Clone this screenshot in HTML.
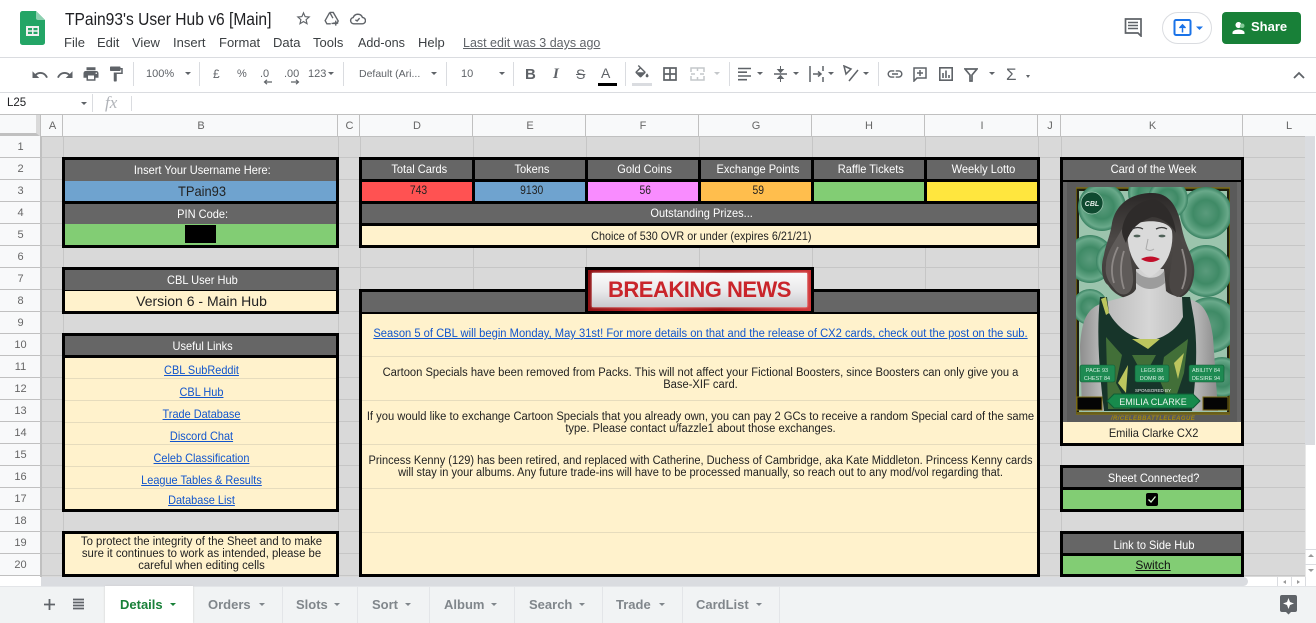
<!DOCTYPE html>
<html><head><meta charset="utf-8"><style>
html,body{margin:0;padding:0;background:#fff}
#p{position:relative;width:1316px;height:623px;overflow:hidden;font-family:"Liberation Sans",sans-serif;color:#202124;background:#fff}
#p div,#p svg.a{position:absolute}
.s{display:inline-block;transform:scaleX(.92)}
.s9{display:inline-block;transform:scaleX(.9)}
.t{white-space:nowrap;text-align:center}
.m{font-size:13px;top:35px;color:#3c4043;white-space:nowrap;line-height:16px}
.tb{font-size:11px;color:#5f6368;top:67px;line-height:14px;white-space:nowrap}
.ar{width:0;height:0;border-left:3.5px solid transparent;border-right:3.5px solid transparent;border-top:3.5px solid #5f6368}
.sep{width:1px;height:24px;top:62px;background:#dadce0}
.rh{left:0;width:41px;height:21px;background:#f8f9fa;border-bottom:1px solid #c0c0c0;text-align:center;font-size:11px;line-height:23px;color:#666}
.ch{top:115px;height:21px;background:#f8f9fa;border-right:1px solid #c0c0c0;border-bottom:1px solid #c0c0c0;text-align:center;font-size:11px;line-height:22px;color:#666;text-indent:2px}
.vl{width:1px;background:#c6c6c6;top:136px;height:441px}
.g{background:#666;color:#fff;font-size:12px;text-align:center;line-height:22px;white-space:nowrap}
.c{background:#fff2cc;color:#222;font-size:12px;text-align:center;white-space:nowrap}
.k{background:#000}
.lk{color:#1155cc;text-decoration:underline;font-size:12px;left:66px;width:271px;text-align:center;height:22px;line-height:24px;white-space:nowrap;transform:scaleX(.91)}
.fl{height:1px;background:#e6dcbd}
.tab{top:597px;font-size:13px;font-weight:bold;color:#80868b;line-height:16px;white-space:nowrap}
.ts{top:587px;height:36px;width:1px;background:#e3e5e8}
.n{font-size:11.5px;text-align:center;left:300px;width:801px;line-height:12.4px;color:#222;white-space:nowrap;transform:scaleX(.972)}
</style></head><body><div id="p">

<!-- Header -->
<svg class="a" style="left:20px;top:11px" width="26" height="34" viewBox="0 0 26 34"><path d="M2.5 0H16L25 9V31.500a2.500 2.500 0 0 1-2.500 2.500H2.500A2.500 2.500 0 0 1 0 31.500V2.500A2.500 2.500 0 0 1 2.500 0z" fill="#23a566"/><path d="M16 0L25 9H18a2 2 0 0 1-2-2z" fill="#8ed1b1"/><path d="M6 15H19V25H6z" fill="#f1f1f1"/><path d="M8 17H12V19.200H8zM13.500 17H17.500V19.200H13.500zM8 20.800H12V23H8zM13.500 20.800H17.500V23H13.500z" fill="#23a566"/></svg>
<div style="left:65px;top:8px;font-size:17.5px;line-height:22px;color:#202124;white-space:nowrap;transform:scaleX(.89);transform-origin:0 0">TPain93's User Hub v6 [Main]</div>
<svg class="a" style="left:295px;top:10px" width="17" height="17" viewBox="0 0 24 24"><path fill="#5f6368" d="M22 9.240l-7.190-.62L12 2 9.190 8.630 2 9.240l5.460 4.730L5.820 21 12 17.270 18.180 21l-1.630-7.030L22 9.240zM12 15.400l-3.760 2.270 1-4.280-3.320-2.880 4.380-.38L12 6.100l1.710 4.040 4.380.38-3.320 2.880 1 4.280L12 15.400z"/></svg>
<svg class="a" style="left:323px;top:10px" width="17" height="17" viewBox="0 0 24 24" fill="none" stroke="#5f6368" stroke-width="1.900"><path d="M9.500 3.500h5l7 12-2 3.500H12M9.500 3.500L3 15l2.500 4.500H11M9.500 3.500L14 11.500"/><path d="M18 15v7M14.500 18.500h7"/></svg>
<svg class="a" style="left:349px;top:10px" width="17" height="17" viewBox="0 0 24 24" fill="none" stroke="#5f6368" stroke-width="2"><path d="M6.500 19.500a4.500 4.500 0 0 1-.6-8.900A7 7 0 0 1 19 10.500a4.500 4.500 0 0 1-.5 9z"/><path d="M9 14l2.500 1.500L15 11.500"/></svg>

<div class="m" style="left:64px">File</div><div class="m" style="left:97px">Edit</div><div class="m" style="left:132px">View</div><div class="m" style="left:173px">Insert</div><div class="m" style="left:219px">Format</div><div class="m" style="left:273px">Data</div><div class="m" style="left:313px">Tools</div><div class="m" style="left:358px;transform:scaleX(.97);transform-origin:0 0">Add-ons</div><div class="m" style="left:418px">Help</div>
<div class="m" style="left:463px;color:#5f6368;text-decoration:underline;transform:scaleX(.96);transform-origin:0 0">Last edit was 3 days ago</div>

<svg class="a" style="left:1123px;top:17px" width="20" height="20" viewBox="0 0 20 20"><path d="M2.500 2H18V19l-3-3H2.500z" fill="none" stroke="#5f6368" stroke-width="1.700"/><path d="M5 5.500H15M5 8.500H15M5 11.500H15" stroke="#5f6368" stroke-width="1.600"/></svg>
<div style="left:1162px;top:12px;width:48px;height:30px;border:1px solid #dadce0;border-radius:16px;background:#fff"></div>
<svg class="a" style="left:1173px;top:18px" width="36" height="20" viewBox="0 0 36 20"><rect x="1.500" y="2" width="16" height="15" rx="1.500" fill="none" stroke="#1a73e8" stroke-width="2"/><path d="M9.500 14.500V8M6.500 10L9.500 6.800 12.500 10" fill="#1a73e8" stroke="#1a73e8" stroke-width="1.500"/><path d="M23 8.500h7l-3.500 3.500z" fill="#1a73e8"/></svg>
<div style="left:1222px;top:12px;width:79px;height:32px;background:#188038;border-radius:4px"></div>
<svg class="a" style="left:1231px;top:19px" width="18" height="18" viewBox="0 0 24 24"><path fill="#fff" d="M10 12c2.210 0 4-1.790 4-4s-1.790-4-4-4-4 1.790-4 4 1.790 4 4 4zm0 2c-2.670 0-8 1.340-8 4v2h16v-2c0-2.660-5.330-4-8-4z"/><circle cx="15" cy="9" r="3" fill="#81c995"/></svg>
<div style="left:1251px;top:19px;color:#fff;font-size:13px;font-weight:bold;line-height:16px">Share</div>

<!-- Toolbar -->
<div style="left:0;top:57px;width:1316px;height:1px;background:#dadce0"></div>
<div style="left:0;top:92px;width:1316px;height:1px;background:#dadce0"></div>
<div style="left:0;top:114px;width:1316px;height:1px;background:#c0c0c0"></div>
<svg class="a" style="left:31px;top:66px" width="18" height="18" viewBox="0 0 24 24"><path fill="#5f6368" d="M12.500 8c-2.650 0-5.050.99-6.900 2.600L2 7v9h9l-3.620-3.620c1.390-1.160 3.160-1.880 5.120-1.880 3.540 0 6.550 2.310 7.600 5.500l2.370-.78C21.080 11.030 17.150 8 12.500 8z"/></svg>
<svg class="a" style="left:56px;top:66px" width="18" height="18" viewBox="0 0 24 24"><path fill="#5f6368" d="M18.400 10.600C16.550 8.990 14.150 8 11.500 8c-4.650 0-8.580 3.030-9.960 7.220L3.900 16c1.050-3.190 4.050-5.500 7.600-5.500 1.950 0 3.730.72 5.120 1.880L13 16h9V7l-3.600 3.600z"/></svg>
<svg class="a" style="left:82px;top:65px" width="18" height="18" viewBox="0 0 24 24"><path fill="#5f6368" d="M19 8H5c-1.660 0-3 1.340-3 3v6h4v4h12v-4h4v-6c0-1.660-1.340-3-3-3zm-3 11H8v-5h8v5zm3-7c-.55 0-1-.45-1-1s.45-1 1-1 1 .45 1 1-.45 1-1 1zm-1-9H6v4h12V3z"/></svg>
<svg class="a" style="left:107px;top:65px" width="18" height="18" viewBox="0 0 24 24"><path fill="#5f6368" d="M18 4V3c0-.55-.45-1-1-1H5c-.55 0-1 .45-1 1v4c0 .55.45 1 1 1h12c.55 0 1-.45 1-1V6h1v4H9v11c0 .55.45 1 1 1h2c.55 0 1-.45 1-1v-9h8V4h-3z"/></svg>
<div class="sep" style="left:133px"></div>
<div class="tb" style="left:146px">100%</div><div class="ar" style="left:185px;top:72px"></div>
<div class="sep" style="left:199px"></div>
<div class="tb" style="left:213px;font-size:12px">£</div>
<div class="tb" style="left:237px">%</div>
<div class="tb" style="left:260px">.0</div>
<svg class="a" style="left:263px;top:79px" width="10" height="6" viewBox="0 0 10 6"><path d="M9 3H2M4 .8L1.500 3 4 5.200" fill="none" stroke="#5f6368" stroke-width="1.200"/></svg>
<div class="tb" style="left:284px">.00</div>
<svg class="a" style="left:290px;top:79px" width="10" height="6" viewBox="0 0 10 6"><path d="M1 3H8M6 .8L8.500 3 6 5.200" fill="none" stroke="#5f6368" stroke-width="1.200"/></svg>
<div class="tb" style="left:308px">123</div><div class="ar" style="left:328px;top:72px"></div>
<div class="sep" style="left:343px"></div>
<div class="tb" style="left:359px;font-size:10.500px">Default (Ari...</div><div class="ar" style="left:431px;top:72px"></div>
<div class="sep" style="left:446px"></div>
<div class="tb" style="left:461px">10</div><div class="ar" style="left:499px;top:72px"></div>
<div class="sep" style="left:513px"></div>
<div class="tb" style="left:525px;top:66px;font-size:15px;font-weight:bold;line-height:17px">B</div>
<div class="tb" style="left:553px;top:66px;font-size:15px;font-weight:bold;font-style:italic;font-family:'Liberation Serif',serif;line-height:17px">I</div>
<div class="tb" style="left:576px;top:66px;font-size:14px;text-decoration:line-through;line-height:17px">S</div>
<div class="tb" style="left:601px;top:65px;font-size:14px;line-height:17px">A</div>
<div style="left:598px;top:83px;width:19px;height:3px;background:#000"></div>
<div class="sep" style="left:625px"></div>
<svg class="a" style="left:633px;top:65px" width="18" height="16" viewBox="0 0 24 22"><path fill="#5f6368" d="M16.600 9L7.600 0 6.200 1.400l2.400 2.400-5.200 5.200c-.6.600-.6 1.500 0 2.100l5.500 5.500c.3.300.7.400 1.100.400s.8-.1 1.100-.4l5.500-5.500c.6-.6.600-1.500 0-2.100zM5.200 10L10 5.200 14.800 10H5.200zM19 11.500s-2 2.200-2 3.500c0 1.100.9 2 2 2s2-.9 2-2c0-1.300-2-3.500-2-3.500z"/></svg>
<div style="left:632px;top:83px;width:20px;height:3px;background:#dadce0"></div>
<svg class="a" style="left:663px;top:67px" width="14" height="14" viewBox="0 0 14 14"><path d="M1 1H13V13H1zM7 1V13M1 7H13" fill="none" stroke="#5f6368" stroke-width="1.700"/></svg>
<svg class="a" style="left:690px;top:67px" width="15" height="14" viewBox="0 0 15 14"><path d="M1 5V1H14V5M1 9V13H14V9M7.500 1V4M7.500 10V13M1 7H5M10 7H14" fill="none" stroke="#c4c7ca" stroke-width="1.500"/></svg>
<div class="ar" style="left:714px;top:72px;border-top-color:#c4c7ca"></div>
<div class="sep" style="left:729px"></div>
<svg class="a" style="left:738px;top:67px" width="13" height="14" viewBox="0 0 13 14"><path d="M0 1.500H13M0 5.200H9M0 9H13M0 12.700H9" stroke="#5f6368" stroke-width="1.600"/></svg><div class="ar" style="left:757px;top:72px"></div>
<svg class="a" style="left:774px;top:66px" width="13" height="16" viewBox="0 0 13 16"><path d="M0 8H13" stroke="#5f6368" stroke-width="1.500"/><path d="M6.500 0V5M3.800 3.500L6.500 6.500 9.200 3.500zM6.500 16V11M3.800 12.500L6.500 9.500 9.200 12.500z" fill="#5f6368" stroke="#5f6368"/></svg><div class="ar" style="left:793px;top:72px"></div>
<svg class="a" style="left:809px;top:66px" width="15" height="16" viewBox="0 0 15 16"><path d="M1 0V16M14 0V5M14 11V16" stroke="#5f6368" stroke-width="1.500" fill="none"/><path d="M4 8H11M9 5.500L12 8 9 10.500" stroke="#5f6368" stroke-width="1.500" fill="none"/></svg><div class="ar" style="left:828px;top:72px"></div>
<svg class="a" style="left:843px;top:65px" width="16" height="17" viewBox="0 0 16 17"><path d="M1 1L8 4 3 9zM15 5L6 16" stroke="#5f6368" stroke-width="1.500" fill="none"/></svg><div class="ar" style="left:863px;top:72px"></div>
<div class="sep" style="left:878px"></div>
<svg class="a" style="left:886px;top:65px" width="18" height="18" viewBox="0 0 24 24"><path fill="#5f6368" d="M3.900 12c0-1.710 1.390-3.100 3.100-3.100h4V7H7c-2.760 0-5 2.240-5 5s2.240 5 5 5h4v-1.900H7c-1.710 0-3.100-1.390-3.100-3.100zM8 13h8v-2H8v2zm9-6h-4v1.900h4c1.710 0 3.100 1.390 3.100 3.100s-1.390 3.100-3.100 3.100h-4V17h4c2.760 0 5-2.240 5-5s-2.240-5-5-5z"/></svg>
<svg class="a" style="left:913px;top:67px" width="14" height="15" viewBox="0 0 14 15"><path d="M1 1H13V11H4L1 14zM7 3V9M4 6H10" fill="none" stroke="#5f6368" stroke-width="1.500"/></svg>
<svg class="a" style="left:939px;top:67px" width="14" height="14" viewBox="0 0 14 14"><path d="M.8.800H13.200V13.200H.8z" fill="none" stroke="#5f6368" stroke-width="1.600"/><path d="M4 6V11M7 3.500V11M10 8V11" stroke="#5f6368" stroke-width="1.600"/></svg>
<svg class="a" style="left:964px;top:68px" width="14" height="14" viewBox="0 0 14 14"><path d="M1 1H13L8 7V13H6V7z" fill="none" stroke="#5f6368" stroke-width="1.700"/></svg><div class="ar" style="left:989px;top:72px"></div>
<div class="tb" style="left:1006px;top:66px;font-size:17px;line-height:18px">Σ</div><div class="ar" style="left:1026px;top:75px;border-left-width:2.500px;border-right-width:2.500px;border-top-width:3px"></div>
<svg class="a" style="left:1293px;top:71px" width="12" height="8" viewBox="0 0 12 8"><path d="M1 7L6 2 11 7" fill="none" stroke="#5f6368" stroke-width="1.800"/></svg>

<!-- Formula bar -->
<div style="left:7px;top:96px;font-size:11.500px;line-height:14px;color:#202124">L25</div>
<div class="ar" style="left:81px;top:102px;border-left-width:3px;border-right-width:3px"></div>
<div style="left:92px;top:94px;width:1px;height:18px;background:#dadce0"></div>
<div style="left:105px;top:93px;font-size:17px;font-family:'Liberation Serif',serif;font-style:italic;color:#b0b3b8;line-height:20px">fx</div>
<div style="left:131px;top:96px;width:1px;height:15px;background:#dadce0"></div>

<!-- Grid background -->
<div style="left:41px;top:136px;width:1264px;height:441px;background:#d9d9d9;background-image:repeating-linear-gradient(to bottom,transparent 0,transparent 21px,#c6c6c6 21px,#c6c6c6 22px)"></div>
<div class="vl" style="left:63px"></div><div class="vl" style="left:338px"></div><div class="vl" style="left:360px"></div><div class="vl" style="left:473px"></div><div class="vl" style="left:586px"></div><div class="vl" style="left:699px"></div><div class="vl" style="left:812px"></div><div class="vl" style="left:925px"></div><div class="vl" style="left:1038px"></div><div class="vl" style="left:1061px"></div><div class="vl" style="left:1243px"></div><div class="vl" style="left:41px;background:#c0c0c0"></div>

<!-- Column headers -->
<div class="ch" style="left:0;width:36px;border-right:5px solid #dadada;border-bottom:4px solid #c0c0c0;height:18px"></div>
<div class="ch" style="left:41px;width:21px">A</div><div class="ch" style="left:63px;width:274px">B</div><div class="ch" style="left:338px;width:21px">C</div><div class="ch" style="left:360px;width:112px">D</div><div class="ch" style="left:473px;width:112px">E</div><div class="ch" style="left:586px;width:112px">F</div><div class="ch" style="left:699px;width:112px">G</div><div class="ch" style="left:812px;width:112px">H</div><div class="ch" style="left:925px;width:112px">I</div><div class="ch" style="left:1038px;width:22px">J</div><div class="ch" style="left:1061px;width:181px">K</div><div class="ch" style="left:1243px;width:62px;border-right:0;text-indent:30px">L</div>
<div style="left:1305px;top:115px;width:11px;height:21px;background:#f8f9fa;border-bottom:1px solid #c0c0c0"></div>

<!-- Row headers -->
<div class="rh" style="top:136px">1</div><div class="rh" style="top:158px">2</div><div class="rh" style="top:180px">3</div><div class="rh" style="top:202px">4</div><div class="rh" style="top:224px">5</div><div class="rh" style="top:246px">6</div><div class="rh" style="top:268px">7</div><div class="rh" style="top:290px">8</div><div class="rh" style="top:312px">9</div><div class="rh" style="top:334px">10</div><div class="rh" style="top:356px">11</div><div class="rh" style="top:378px">12</div><div class="rh" style="top:400px">13</div><div class="rh" style="top:422px">14</div><div class="rh" style="top:444px">15</div><div class="rh" style="top:466px">16</div><div class="rh" style="top:488px">17</div><div class="rh" style="top:510px">18</div><div class="rh" style="top:532px">19</div><div class="rh" style="top:554px">20</div>
<div style="left:40px;top:115px;width:1px;height:462px;background:#c0c0c0"></div>

<!-- B2:B5 -->
<div class="k" style="left:62px;top:157px;width:277px;height:91px"></div>
<div class="g" style="left:65px;top:160px;width:271px;height:21px;line-height:21px;text-indent:2px"><span class="s">Insert Your Username Here:</span></div>
<div class="t" style="left:65px;top:181px;width:271px;height:20px;background:#6fa3cf;font-size:14px;line-height:21px;color:#222;text-indent:2px"><span class="s">TPain93</span></div>
<div class="g" style="left:65px;top:204px;width:271px;height:20px;line-height:20px;text-indent:2px"><span class="s">PIN Code:</span></div>
<div style="left:65px;top:224px;width:271px;height:21px;background:#82cd74"></div>
<div class="k" style="left:185px;top:225px;width:31px;height:18px"></div>

<!-- B7:B8 -->
<div class="k" style="left:62px;top:267px;width:277px;height:47px"></div>
<div class="g" style="left:65px;top:270px;width:271px;height:20px;line-height:21px;text-indent:2px"><span class="s">CBL User Hub</span></div>
<div class="c" style="left:65px;top:291px;width:271px;height:20px;font-size:14px;line-height:20px;text-indent:2px">Version 6 - Main Hub</div>

<!-- B10:B17 -->
<div class="k" style="left:62px;top:333px;width:277px;height:179px"></div>
<div class="g" style="left:65px;top:336px;width:271px;height:19px;line-height:20px;text-indent:2px"><span class="s">Useful Links</span></div>
<div class="c" style="left:65px;top:358px;width:271px;height:151px"></div>
<div class="fl" style="left:65px;top:378px;width:271px"></div><div class="fl" style="left:65px;top:400px;width:271px"></div><div class="fl" style="left:65px;top:422px;width:271px"></div><div class="fl" style="left:65px;top:444px;width:271px"></div><div class="fl" style="left:65px;top:466px;width:271px"></div><div class="fl" style="left:65px;top:488px;width:271px"></div>
<div class="lk" style="top:358px">CBL SubReddit</div><div class="lk" style="top:380px">CBL Hub</div><div class="lk" style="top:402px">Trade Database</div><div class="lk" style="top:424px">Discord Chat</div><div class="lk" style="top:446px">Celeb Classification</div><div class="lk" style="top:468px">League Tables &amp; Results</div><div class="lk" style="top:488px">Database List</div>

<!-- B19:B20 -->
<div class="k" style="left:62px;top:531px;width:277px;height:46px"></div>
<div class="c" style="left:65px;top:534px;width:271px;height:40px"></div>
<div style="left:66px;top:537px;width:271px;font-size:11.500px;line-height:11.800px;color:#222;text-align:center;white-space:nowrap;transform:scaleX(.985)">To protect the integrity of the Sheet and to make<br>sure it continues to work as intended, please be<br>careful when editing cells</div>

<!-- D2:I5 -->
<div class="k" style="left:359px;top:157px;width:681px;height:91px"></div>
<div class="g" style="left:362px;top:160px;width:110px;height:19px;line-height:19px;text-indent:2px"><span class="s">Total Cards</span></div>
<div class="g" style="left:475px;top:160px;width:110px;height:19px;line-height:19px;text-indent:2px"><span class="s">Tokens</span></div>
<div class="g" style="left:588px;top:160px;width:110px;height:19px;line-height:19px;text-indent:2px"><span class="s">Gold Coins</span></div>
<div class="g" style="left:701px;top:160px;width:110px;height:19px;line-height:19px;text-indent:2px"><span class="s">Exchange Points</span></div>
<div class="g" style="left:814px;top:160px;width:110px;height:19px;line-height:19px;text-indent:2px"><span class="s">Raffle Tickets</span></div>
<div class="g" style="left:927px;top:160px;width:110px;height:19px;line-height:19px;text-indent:2px"><span class="s">Weekly Lotto</span></div>
<div class="t" style="left:362px;top:182px;width:110px;height:19px;background:#ff5252;font-size:11.500px;line-height:19px;color:#222;text-indent:2px"><span class="s9">743</span></div>
<div class="t" style="left:475px;top:182px;width:110px;height:19px;background:#6fa3cf;font-size:11.500px;line-height:19px;color:#222;text-indent:2px"><span class="s9">9130</span></div>
<div class="t" style="left:588px;top:182px;width:110px;height:19px;background:#f98cff;font-size:11.500px;line-height:19px;color:#222;text-indent:2px"><span class="s9">56</span></div>
<div class="t" style="left:701px;top:182px;width:110px;height:19px;background:#ffbe4d;font-size:11.500px;line-height:19px;color:#222;text-indent:2px"><span class="s9">59</span></div>
<div style="left:814px;top:182px;width:110px;height:19px;background:#82cd74"></div>
<div style="left:927px;top:182px;width:110px;height:19px;background:#ffe63e"></div>
<div class="g" style="left:362px;top:204px;width:675px;height:19px;line-height:19px;text-indent:2px"><span class="s">Outstanding Prizes...</span></div>
<div class="c" style="left:362px;top:226px;width:675px;height:19px;line-height:20px;text-indent:2px"><span class="s9">Choice of 530 OVR or under (expires 6/21/21)</span></div>

<!-- News -->
<div class="k" style="left:359px;top:289px;width:681px;height:288px"></div>
<div class="g" style="left:362px;top:292px;width:675px;height:20px"></div>
<div class="c" style="left:362px;top:314px;width:675px;height:260px"></div>
<div class="fl" style="left:362px;top:356px;width:675px"></div><div class="fl" style="left:362px;top:400px;width:675px"></div><div class="fl" style="left:362px;top:444px;width:675px"></div><div class="fl" style="left:362px;top:488px;width:675px"></div><div class="fl" style="left:362px;top:532px;width:675px"></div>
<div class="k" style="left:585px;top:267px;width:229px;height:47px"></div>
<div style="left:588px;top:270px;width:223px;height:41px;background:linear-gradient(100deg,#8c0f12,#c92a2c 30%,#a01012 60%,#d3393b)"></div>
<div style="left:592px;top:273px;width:215px;height:34px;background:linear-gradient(#fafafa,#e8e8ea 55%,#c9c9cd);box-shadow:0 0 2px #fff"></div>
<div class="t" style="left:588px;top:276px;width:223px;font-size:22px;font-weight:bold;color:#c9252b;line-height:28px;letter-spacing:-.5px">BREAKING NEWS</div>

<div class="n" style="top:327px;line-height:14px"><span style="color:#1155cc;text-decoration:underline">Season 5 of CBL will begin Monday, May 31st! For more details on that and the release of CX2 cards, check out the post on the sub.</span></div>
<div class="n" style="top:367px">Cartoon Specials have been removed from Packs. This will not affect your Fictional Boosters, since Boosters can only give you a<br>Base-XIF card.</div>
<div class="n" style="top:411px">If you would like to exchange Cartoon Specials that you already own, you can pay 2 GCs to receive a random Special card of the same<br>type. Please contact u/fazzle1 about those exchanges.</div>
<div class="n" style="top:455px;transform:scaleX(.96)">Princess Kenny (129) has been retired, and replaced with Catherine, Duchess of Cambridge, aka Kate Middleton. Princess Kenny cards<br>will stay in your albums. Any future trade-ins will have to be processed manually, so reach out to any mod/vol regarding that.</div>

<!-- K2 Card -->
<div class="k" style="left:1060px;top:157px;width:184px;height:289px"></div>
<div class="g" style="left:1063px;top:160px;width:178px;height:20px;line-height:19px;text-indent:2px"><span class="s">Card of the Week</span></div>
<div style="left:1063px;top:182px;width:178px;height:240px;background:#666"></div>
<div style="left:1067px;top:182px;width:170px;height:240px;background:#5a5a5a"></div>
<svg class="a" style="left:1076px;top:187px" width="154" height="235" viewBox="0 0 154 235">
<defs>
<radialGradient id="c1" cx="50%" cy="50%" r="50%"><stop offset="0" stop-color="#5a9b7c"/><stop offset=".5" stop-color="#3f8a66"/><stop offset=".85" stop-color="#69a98a"/><stop offset="1" stop-color="#378060"/></radialGradient>
<linearGradient id="sk" x1="0" x2="1"><stop offset="0" stop-color="#8e8e8e"/><stop offset=".15" stop-color="#b8b8b8"/><stop offset=".5" stop-color="#d6d6d6"/><stop offset=".85" stop-color="#b4b4b4"/><stop offset="1" stop-color="#8a8a8a"/></linearGradient>
<linearGradient id="hr" x1="0" x2="0" y1="0" y2="1"><stop offset="0" stop-color="#2b2827"/><stop offset=".45" stop-color="#4d4947"/><stop offset="1" stop-color="#3b3836"/></linearGradient>
</defs>
<rect x="0" y="1" width="154" height="226" fill="#1e1e10" stroke="#7a6a12" stroke-width="1.500"/>
<rect x="3" y="4" width="148" height="221" fill="#9cc4ad"/>
<g fill="url(#c1)"><circle cx="26" cy="20" r="24"/><circle cx="72" cy="6" r="20"/><circle cx="130" cy="26" r="26"/><circle cx="92" cy="12" r="20"/><circle cx="14" cy="72" r="24"/><circle cx="130" cy="84" r="26"/><circle cx="40" cy="74" r="20"/><circle cx="134" cy="138" r="28"/><circle cx="14" cy="120" r="18"/><circle cx="146" cy="190" r="20"/></g>
<circle cx="16" cy="16" r="11" fill="#0f4a30" stroke="#9fc9b2" stroke-width=".7"/>
<text x="16" y="19" font-size="7" font-style="italic" font-weight="bold" fill="#e8f0ec" text-anchor="middle" font-family="Liberation Sans">CBL</text>
<!-- hair back -->
<path d="M76 6C56 6 40 16 36 36 34 50 30 56 28 68 24 80 26 94 32 98 36 104 42 110 54 112L96 112C108 112 116 104 118 88 120 72 110 62 106 42 102 20 94 6 76 6z" fill="url(#hr)"/>
<!-- body -->
<path d="M60 82H88L90 104C96 110 108 110 116 113 128 117 134 128 137 150L142 224H6L4 160C6 130 12 120 30 115 42 111 56 110 60 102z" fill="url(#sk)"/>
<path d="M60 84C66 92 82 94 88 84L89 96C80 104 68 104 60 96z" fill="#9c9c9c"/>
<!-- hair locks over shoulders -->
<path d="M46 42C38 56 30 66 30 78 28 92 36 98 40 104 46 110 54 108 56 100 60 88 52 72 54 56z" fill="#5f5b59"/>
<path d="M100 42C106 60 116 70 116 84 116 98 110 106 102 110 94 108 92 98 94 86 96 72 98 56 100 42z" fill="#4a4644"/>
<path d="M42 60C36 72 34 84 38 96M48 64C44 76 44 90 48 102M106 62C110 76 112 88 106 102" stroke="#8d8886" stroke-width="1.800" fill="none"/>
<!-- face -->
<path d="M52 44C56 32 92 30 96 44 98 60 92 80 74 90 58 82 50 62 52 44z" fill="#dadada"/>
<path d="M46 44C48 24 62 14 78 12 90 16 98 28 100 46 94 36 84 30 76 30 66 34 56 38 50 56 48 52 46 48 46 44z" fill="#2e2b2a"/>
<path d="M56 42q6-3 11 0M80 42q6-3 11 0" stroke="#3a3a3a" stroke-width="1.300" fill="none"/>
<ellipse cx="61" cy="49" rx="3.500" ry="1.400" fill="#4f6158"/><ellipse cx="86" cy="49" rx="3.500" ry="1.400" fill="#4f6158"/>
<path d="M72 52L70 62Q74 65 78 62" stroke="#aaa" stroke-width="1" fill="none"/>
<path d="M65 72Q74 67 84 72 75 78 65 72z" fill="#c10f2a"/>
<!-- dress -->
<path d="M24 110H31L33 126C42 142 58 152 72 154 86 152 100 144 107 130L106 110H114L118 132C122 160 120 190 116 224H28C24 190 20 150 24 110z" fill="#17352a"/>
<path d="M30 150L46 168 40 196 54 222H32zM88 170L112 152 108 186 96 222 84 194zM56 168L80 168 68 190z" fill="#47763a" opacity=".9"/>
<path d="M25 112L30 128 33 126 30 110zM56 152L84 152 72 162zM42 196L52 178 50 206zM98 176L108 166 102 192z" fill="#bcc65e"/>
<g fill="#1e8a52" stroke="#0f5c35" stroke-width=".6"><rect x="4" y="178" width="35" height="17" rx="2"/><rect x="59" y="178" width="34" height="17" rx="2"/><rect x="113" y="178" width="35" height="17" rx="2"/></g>
<g font-family="Liberation Sans" font-size="5.500" fill="#d6efe0" text-anchor="middle">
<text x="21" y="185">PACE 93</text><text x="21" y="193">CHEST 84</text>
<text x="76" y="185">LEGS 88</text><text x="76" y="193">DOMR 86</text>
<text x="130" y="185">ABILITY 84</text><text x="130" y="193">DESIRE 94</text></g>
<text x="77" y="205" font-family="Liberation Sans" font-size="4.500" fill="#eee" text-anchor="middle">SPONSORED BY</text>
<rect x="1" y="210" width="25" height="13" fill="#050505" stroke="#7a6a12"/>
<rect x="127" y="210" width="25" height="13" fill="#050505" stroke="#7a6a12"/>
<path d="M38 207H117L124 214 117 221H38L31 214z" fill="#178a4c" stroke="#0f5c35"/>
<text x="77" y="218" font-family="Liberation Sans" font-size="9" fill="#e8f4ec" text-anchor="middle">EMILIA CLARKE</text>
<rect x="0" y="225" width="154" height="2" fill="#6a5f18"/>
<text x="77" y="233" font-family="Liberation Sans" font-size="6" font-style="italic" font-weight="bold" fill="#a58a08" text-anchor="middle" letter-spacing=".4">/R/CELEBBATTLELEAGUE</text>
</svg>
<div class="c" style="left:1063px;top:422px;width:178px;height:21px;line-height:22px;text-indent:2px"><span class="s">Emilia Clarke CX2</span></div>

<!-- K16:K17 -->
<div class="k" style="left:1060px;top:465px;width:184px;height:47px"></div>
<div class="g" style="left:1063px;top:468px;width:178px;height:19px;line-height:20px;text-indent:2px"><span class="s">Sheet Connected?</span></div>
<div style="left:1063px;top:490px;width:178px;height:19px;background:#82cd74"></div>
<svg class="a" style="left:1146px;top:493px" width="12" height="13" viewBox="0 0 12 13"><rect width="12" height="13" rx="2" fill="#000"/><path d="M2.500 6.500L5 9 9.500 3.500" stroke="#d6f5ce" stroke-width="1.300" fill="none"/></svg>

<!-- K19:K20 -->
<div class="k" style="left:1060px;top:531px;width:184px;height:46px"></div>
<div class="g" style="left:1063px;top:534px;width:178px;height:19px;line-height:22px;text-indent:2px"><span class="s">Link to Side Hub</span></div>
<div class="t" style="left:1063px;top:556px;width:178px;height:18px;background:#82cd74;font-size:12px;line-height:18px;color:#111;text-indent:2px"><span style="text-decoration:underline">Switch</span></div>

<!-- Scrollbars -->
<div style="left:1305px;top:136px;width:11px;height:441px;background:#fff;border-left:1px solid #e8e8e8;box-sizing:border-box"></div>
<div style="left:1305px;top:136px;width:10px;height:309px;background:#dadce0"></div>
<div style="left:1305px;top:549px;width:11px;height:14px;border-top:1px solid #dadce0;border-bottom:1px solid #dadce0"></div>
<div class="ar" style="left:1308px;top:554px;border-top:0;border-bottom:3px solid #999;border-left-width:3px;border-right-width:3px"></div>
<div class="ar" style="left:1308px;top:569px;border-left-width:3px;border-right-width:3px;border-top-width:3px;border-top-color:#999"></div>
<div style="left:0;top:577px;width:1316px;height:9px;background:#fff"></div>
<div style="left:41px;top:577px;width:1207px;height:9px;background:#dadce0;border-radius:0 5px 5px 0"></div>
<div style="left:1277px;top:577px;width:1px;height:9px;background:#dadce0"></div><div style="left:1291px;top:577px;width:1px;height:9px;background:#dadce0"></div><div style="left:1305px;top:577px;width:1px;height:9px;background:#dadce0"></div>
<div style="left:1283px;top:580px;width:0;height:0;border-top:2.500px solid transparent;border-bottom:2.500px solid transparent;border-right:3px solid #999"></div>
<div style="left:1297px;top:580px;width:0;height:0;border-top:2.500px solid transparent;border-bottom:2.500px solid transparent;border-left:3px solid #999"></div>

<!-- Tabs -->
<div style="left:0;top:586px;width:1316px;height:37px;background:#f1f3f4;border-top:1px solid #e3e5e8;box-sizing:border-box"></div>
<div style="left:105px;top:586px;width:88px;height:37px;background:#fff;box-shadow:0 0 2px #ccc"></div>
<svg class="a" style="left:43px;top:598px" width="13" height="13" viewBox="0 0 13 13"><path d="M6.500 1V12M1 6.500H12" stroke="#5f6368" stroke-width="1.800"/></svg>
<svg class="a" style="left:72px;top:598px" width="13" height="13" viewBox="0 0 13 13"><path d="M1 1.500H12M1 4.500H12M1 7.500H12M1 10.500H12" stroke="#5f6368" stroke-width="1.700"/></svg>
<div class="tab" style="left:120px;color:#188038">Details</div><div class="ar" style="left:170px;top:603px;border-top-color:#188038"></div>
<div class="tab" style="left:208px">Orders</div><div class="ar" style="left:259px;top:603px;border-top-color:#80868b"></div>
<div class="ts" style="left:282px"></div>
<div class="tab" style="left:296px">Slots</div><div class="ar" style="left:334px;top:603px;border-top-color:#80868b"></div>
<div class="ts" style="left:357px"></div>
<div class="tab" style="left:372px">Sort</div><div class="ar" style="left:405px;top:603px;border-top-color:#80868b"></div>
<div class="ts" style="left:429px"></div>
<div class="tab" style="left:444px">Album</div><div class="ar" style="left:491px;top:603px;border-top-color:#80868b"></div>
<div class="ts" style="left:514px"></div>
<div class="tab" style="left:529px">Search</div><div class="ar" style="left:579px;top:603px;border-top-color:#80868b"></div>
<div class="ts" style="left:602px"></div>
<div class="tab" style="left:616px">Trade</div><div class="ar" style="left:659px;top:603px;border-top-color:#80868b"></div>
<div class="ts" style="left:682px"></div>
<div class="tab" style="left:696px">CardList</div><div class="ar" style="left:756px;top:603px;border-top-color:#80868b"></div>
<div class="ts" style="left:779px"></div>
<svg class="a" style="left:1280px;top:595px" width="17" height="20" viewBox="0 0 17 20"><path d="M2 0H15a2 2 0 0 1 2 2V15a2 2 0 0 1-2 2H11L8.500 19.500 6 17H2a2 2 0 0 1-2-2V2a2 2 0 0 1 2-2z" fill="#5f6368"/><path d="M8.500 3L10 7 14 8.500 10 10 8.500 14 7 10 3 8.500 7 7z" fill="#fff"/></svg>
</div></body></html>
